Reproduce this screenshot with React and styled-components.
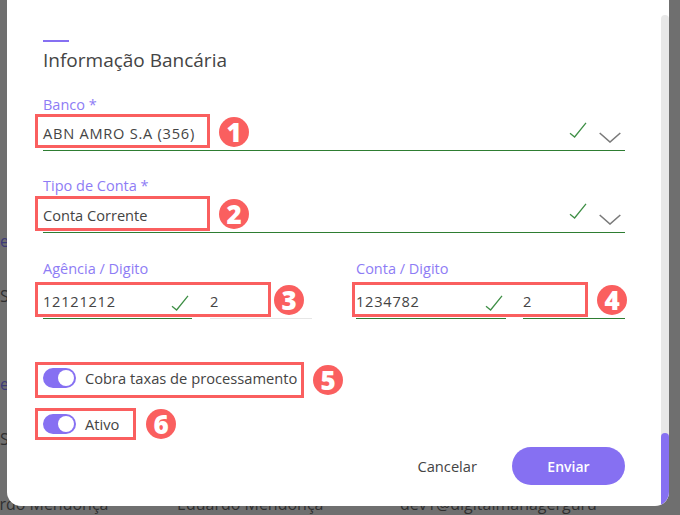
import React from 'react';
import styled, { createGlobalStyle } from 'styled-components';

const GlobalStyle = createGlobalStyle`
  html, body { margin: 0; padding: 0; }
  body {
    width: 680px;
    height: 515px;
    overflow: hidden;
    font-family: "Open Sans", "Liberation Sans", sans-serif;
  }
`;

const marks = [
  { n: 1, x: 35, y: 114, w: 175, h: 34, cx: 234, cy: 132 },
  { n: 2, x: 35, y: 196, w: 175, h: 35, cx: 234, cy: 214 },
  { n: 3, x: 35, y: 282, w: 236, h: 35, cx: 289, cy: 300 },
  { n: 4, x: 352, y: 282, w: 236, h: 35, cx: 612, cy: 300 },
  { n: 5, x: 35, y: 362, w: 269, h: 36, cx: 328, cy: 380 },
  { n: 6, x: 35, y: 408, w: 101, h: 32, cx: 161, cy: 424 },
];

const Check = ({ $top = '-7px' }) => (
  <CheckIcon $top={$top} viewBox="0 0 18 16" width="18" height="16">
    <path d="M1 11.3 L5.6 15 L17 .8" fill="none" stroke="#3f8f46" strokeWidth="1.3" />
  </CheckIcon>
);

const Chevron = () => (
  <ChevronIcon viewBox="0 0 22 11" width="22" height="11">
    <path d="M.7 1 L11 10 L21.3 1" fill="none" stroke="#7a7a7a" strokeWidth="1.6" />
  </ChevronIcon>
);

const App = () => (
  <Page>
    <GlobalStyle />
    <BackTable>
      <BackLink>e</BackLink>
      <BackCell>S</BackCell>
      <BackLink>e</BackLink>
      <BackCell>S</BackCell>
      <BackFoot>
        <span>Eduardo Mendonça</span>
        <span>Eduardo Mendonça</span>
        <span>dev1@digitalmanagerguru</span>
      </BackFoot>
    </BackTable>

    <Modal>
      <Body>
        <AccentBar />
        <Heading>Informação Bancária</Heading>

        <SelectField>
          <Label>Banco *</Label>
          <Control $ok>
            <Value $wide>ABN AMRO S.A (356)</Value>
            <Check />
            <Chevron />
          </Control>
        </SelectField>

        <SelectField>
          <Label>Tipo de Conta *</Label>
          <Control $ok $tall>
            <Value>Conta Corrente</Value>
            <Check />
            <Chevron />
          </Control>
        </SelectField>

        <TwoColumns>
          <div>
            <Label>Agência / Digito</Label>
            <DigitRow $gap="18px">
              <Control $ok>
                <Value $wide>12121212</Value>
                <Check $top="3px" />
              </Control>
              <Control>
                <Value>2</Value>
              </Control>
            </DigitRow>
          </div>
          <div>
            <Label>Conta / Digito</Label>
            <DigitRow $gap="17px">
              <Control $ok>
                <Value $wide>1234782</Value>
                <Check $top="3px" />
              </Control>
              <Control $ok>
                <Value>2</Value>
              </Control>
            </DigitRow>
          </div>
        </TwoColumns>

        <ToggleRow $top="49px">
          <Toggle />
          <ToggleLabel>Cobra taxas de processamento</ToggleLabel>
        </ToggleRow>
        <ToggleRow $top="26px">
          <Toggle />
          <ToggleLabel>Ativo</ToggleLabel>
        </ToggleRow>

        <Footer>
          <CancelButton>Cancelar</CancelButton>
          <SendButton>Enviar</SendButton>
        </Footer>
      </Body>
      <ScrollTrack>
        <ScrollThumb />
      </ScrollTrack>
    </Modal>

    {marks.map((m) => (
      <React.Fragment key={m.n}>
        <MarkBox $x={m.x} $y={m.y} $w={m.w} $h={m.h} />
        <MarkBadge $cx={m.cx} $cy={m.cy}>{m.n}</MarkBadge>
      </React.Fragment>
    ))}
  </Page>
);

export default App;

const Page = styled.div`
  position: relative;
  width: 680px;
  height: 515px;
  overflow: hidden;
  background: #6f6f6f;
`;

const BackTable = styled.div`
  display: flex;
  flex-direction: column;
  height: 515px;
  box-sizing: border-box;
  padding-top: 231px;
  font-size: 16px;
  color: #2f2f2f;
`;

const BackCell = styled.div`
  height: 20px;
  line-height: 20px;
  margin-bottom: 68px;
`;

const BackLink = styled(BackCell)`
  color: #3d3a78;
  margin-bottom: 35px;
`;

const BackFoot = styled.div`
  display: grid;
  grid-template-columns: 215px 223px auto;
  margin-top: -23px;
  margin-left: -38px;
  white-space: nowrap;
  font-size: 16px;
  line-height: 20px;
`;

const Modal = styled.div`
  position: absolute;
  left: 7px;
  top: -20px;
  width: 662px;
  height: 526px;
  background: #fff;
  border-radius: 14px;
  overflow: hidden;
  display: flex;
`;

const Body = styled.div`
  flex: 1;
  box-sizing: border-box;
  padding: 60px 36px 0 36px;
  color: #444;
`;

const AccentBar = styled.div`
  width: 26px;
  height: 2px;
  background: #8670f2;
`;

const Heading = styled.h2`
  margin: 6px 0 0;
  font-size: 19px;
  line-height: 24px;
  font-weight: 400;
  color: #444;
`;

const SelectField = styled.div`
  margin-top: 24px;
  & + & { margin-top: 26px; }
`;

const Label = styled.div`
  font-size: 14.5px;
  line-height: 18px;
  color: #8e7cf5;
`;

const Control = styled.div`
  display: flex;
  align-items: ${(p) => (p.$tall ? 'flex-start' : 'center')};
  height: ${(p) => (p.$tall ? '35px' : '34px')};
  margin-top: 2px;
  border-bottom: 1px solid ${(p) => (p.$ok ? '#2e7d32' : '#e6e6e6')};
`;

const Value = styled.div`
  flex: 1;
  align-self: center;
  font-size: 14.6px;
  line-height: 20px;
  letter-spacing: ${(p) => (p.$wide ? '0.75px' : '0')};
  color: #444;
`;

const CheckIcon = styled.svg`
  flex: none;
  align-self: center;
  margin: ${(p) => p.$top} 3px 0 0;
`;

const ChevronIcon = styled.svg`
  flex: none;
  align-self: center;
  margin: 9px 4px 0 9px;
`;

const TwoColumns = styled.div`
  display: grid;
  grid-template-columns: 269px 269px;
  column-gap: 44px;
  margin-top: 27px;
`;

const DigitRow = styled.div`
  display: grid;
  grid-template-columns: 1fr 102px;
  column-gap: ${(p) => p.$gap};
  margin-top: 4px;
`;

const ToggleRow = styled.label`
  display: flex;
  align-items: center;
  gap: 9px;
  margin-top: ${(p) => p.$top};
`;

const Toggle = styled.span`
  display: block;
  position: relative;
  width: 33px;
  height: 20px;
  border-radius: 10px;
  background: #8670f2;
  &::after {
    content: '';
    position: absolute;
    right: 2px;
    top: 2px;
    width: 16px;
    height: 16px;
    border-radius: 50%;
    background: #fff;
  }
`;

const ToggleLabel = styled.span`
  font-size: 14.7px;
  line-height: 20px;
  color: #444;
`;

const Footer = styled.div`
  display: flex;
  justify-content: flex-end;
  align-items: center;
  gap: 35px;
  margin-top: 13px;
`;

const CancelButton = styled.button`
  border: 0;
  background: none;
  padding: 0;
  font: inherit;
  font-size: 14.7px;
  color: #444;
`;

const SendButton = styled.button`
  width: 113px;
  height: 38px;
  border: 0;
  border-radius: 19px;
  background: #8670f2;
  color: #fff;
  font: inherit;
  font-size: 14px;
  font-weight: 600;
`;

const ScrollTrack = styled.div`
  flex: none;
  width: 8px;
  margin-top: 35px;
  background: #e8e8e8;
  border-radius: 8px 8px 0 0;
  display: flex;
  flex-direction: column;
  justify-content: flex-end;
`;

const ScrollThumb = styled.div`
  height: 73px;
  background: #8670f2;
  border-radius: 8px 8px 0 0;
`;

const MarkBox = styled.div`
  position: absolute;
  left: ${(p) => p.$x}px;
  top: ${(p) => p.$y}px;
  width: ${(p) => p.$w}px;
  height: ${(p) => p.$h}px;
  box-sizing: border-box;
  border: 3px solid #fa5f5f;
`;

const MarkBadge = styled.div`
  position: absolute;
  left: ${(p) => p.$cx - 15}px;
  top: ${(p) => p.$cy - 15}px;
  width: 30px;
  height: 30px;
  border-radius: 50%;
  background: #fa5f5f;
  color: #fff;
  font-family: "Open Sans", sans-serif;
  font-weight: 800;
  font-size: 26px;
  line-height: 30px;
  text-align: center;
`;
